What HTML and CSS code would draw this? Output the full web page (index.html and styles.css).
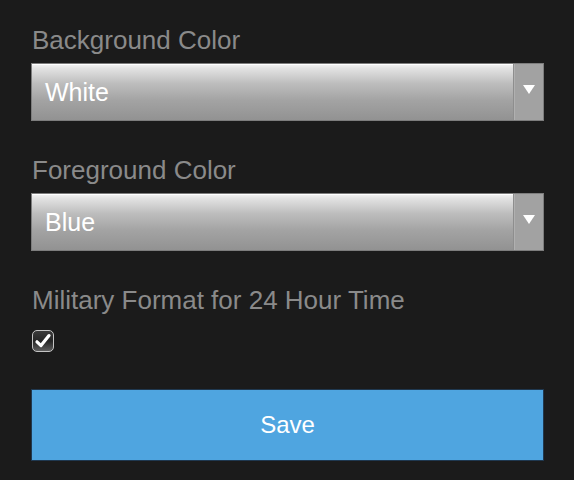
FILE: index.html
```html
<!DOCTYPE html>
<html>
<head>
<meta charset="utf-8">
<link rel="stylesheet" href="styles.css">
</head>
<body>
<div class="form">
  <div class="field">
    <div class="label">Background Color</div>
    <div class="select">
      <span class="value">White</span>
      <span class="arrow"><span class="tri"></span></span>
    </div>
  </div>
  <div class="field">
    <div class="label">Foreground Color</div>
    <div class="select">
      <span class="value">Blue</span>
      <span class="arrow"><span class="tri"></span></span>
    </div>
  </div>
  <div class="field field-check">
    <div class="label">Military Format for 24 Hour Time</div>
    <div class="check">
      <svg width="18" height="18" viewBox="0 0 18 18"><path d="M3 9.8 L7 13.6 L15 3.6" fill="none" stroke="#fff" stroke-width="3.2" stroke-linecap="round" stroke-linejoin="round"/></svg>
    </div>
  </div>
  <button class="save">Save</button>
</div>
</body>
</html>
```
FILE: styles.css
```css
html, body {
  margin: 0;
  padding: 0;
  background: #1b1b1b;
  height: 100%;
}
body {
  font-family: "Liberation Sans", Arial, sans-serif;
}
.form {
  padding: 25px 30px 0 31px;
  display: flex;
  flex-direction: column;
}
.field {
  margin-bottom: 34px;
}
.label {
  color: #8a8a8a;
  font-size: 26px;
  line-height: 30px;
  margin-bottom: 8px;
  padding-left: 1px;
}
.select {
  display: flex;
  height: 56px;
  border: 1px solid #7d7d7d;
  background: linear-gradient(#f4f4f4 0%, #e2e2e2 8%, #bdbdbd 35%, #a3a3a3 65%, #929292 100%);
  box-shadow: inset 0 1px 0 #ffffff;
}
.value {
  flex: 1;
  color: #fff;
  font-size: 25px;
  line-height: 56px;
  padding-left: 13px;
}
.arrow {
  width: 30px;
  background: #a2a2a2;
  border-left: 1px solid #8e8e8e;
  box-shadow: inset 1px 0 0 #b0b0b0;
  display: flex;
  justify-content: center;
  padding-top: 21px;
  box-sizing: border-box;
}
.tri {
  width: 0;
  height: 0;
  border-left: 6px solid transparent;
  border-right: 6px solid transparent;
  border-top: 9px solid #fff;
}
.field-check {
  margin-bottom: 37px;
}
.field-check .label {
  margin-bottom: 15px;
}
.check {
  margin-left: 1px;
  width: 22px;
  height: 22px;
  box-sizing: border-box;
  border: 1.5px solid #c4c4c4;
  border-radius: 5px;
  background: linear-gradient(#3a3a3a, #252525 50%, #5e5e5e);
  display: flex;
  align-items: center;
  justify-content: center;
}
.save {
  height: 72px;
  border: 1px solid #1f3850;
  background: #4fa5e0;
  color: #fff;
  font-family: "Liberation Sans", Arial, sans-serif;
  font-size: 24px;
  padding: 0;
  margin: 0;
}
```
